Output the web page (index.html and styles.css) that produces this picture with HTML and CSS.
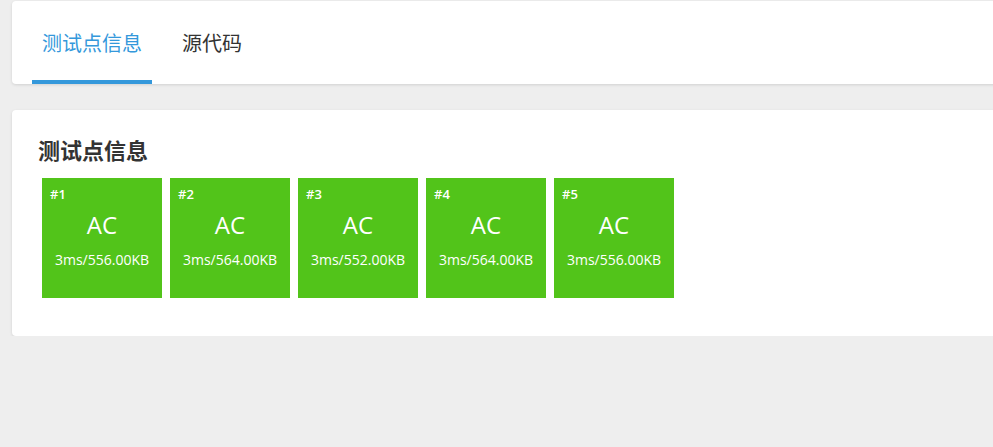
FILE: index.html
```html
<!DOCTYPE html>
<html lang="zh">
<head>
<meta charset="utf-8">
<title>测试点信息</title>
<link rel="stylesheet" href="styles.css">
</head>
<body>
<div class="page">
  <div class="card tabs-card">
    <div class="tab active">测试点信息</div>
    <div class="tab">源代码</div>
  </div>
  <div class="card cases-card">
    <h2 class="title">测试点信息</h2>
    <div class="cases">
      <div class="case"><div class="num">#1</div><div class="status">AC</div><div class="usage">3ms/556.00KB</div></div>
      <div class="case"><div class="num">#2</div><div class="status">AC</div><div class="usage">3ms/564.00KB</div></div>
      <div class="case"><div class="num">#3</div><div class="status">AC</div><div class="usage">3ms/552.00KB</div></div>
      <div class="case"><div class="num">#4</div><div class="status">AC</div><div class="usage">3ms/564.00KB</div></div>
      <div class="case"><div class="num">#5</div><div class="status">AC</div><div class="usage">3ms/556.00KB</div></div>
    </div>
  </div>
</div>
</body>
</html>
```
FILE: styles.css
```css
html, body {
  margin: 0;
  padding: 0;
  background: #eeeeee;
  overflow: hidden;
  font-family: "Open Sans", "Noto Sans CJK SC", sans-serif;
  color: #333;
}
.page {
  width: 1100px;
  padding: 1px 0 0 12px;
}
.card {
  background: #fff;
  border-radius: 4px;
  box-shadow: 0 1px 3px rgba(0, 0, 0, 0.12);
}
.tabs-card {
  height: 83px;
  display: flex;
  gap: 20px;
  padding-left: 20px;
  box-sizing: border-box;
}
.tab {
  padding: 4px 10px 0;
  font-size: 20px;
  display: flex;
  align-items: center;
  border-bottom: 4px solid transparent;
  color: #333;
}
.tab.active {
  color: #3498db;
  border-bottom-color: #3498db;
}
.cases-card {
  margin-top: 26px;
  padding: 24px 26px 34px;
}
.title {
  margin: 0 0 8px;
  font-size: 22px;
  line-height: 32px;
  font-weight: bold;
  color: #333;
}
.cases {
  display: flex;
  flex-wrap: wrap;
}
.case {
  width: 120px;
  height: 120px;
  margin: 4px;
  background: #52c41a;
  color: #fff;
  box-sizing: border-box;
  padding: 8px 8px 0;
  display: flex;
  flex-direction: column;
}
.num {
  font-size: 13px;
  line-height: 16px;
  font-weight: 600;
}
.status {
  text-align: center;
  font-size: 24px;
  line-height: 32px;
  margin-top: 7px;
}
.usage {
  text-align: center;
  font-size: 14px;
  line-height: 20px;
  margin-top: 9px;
}
```
